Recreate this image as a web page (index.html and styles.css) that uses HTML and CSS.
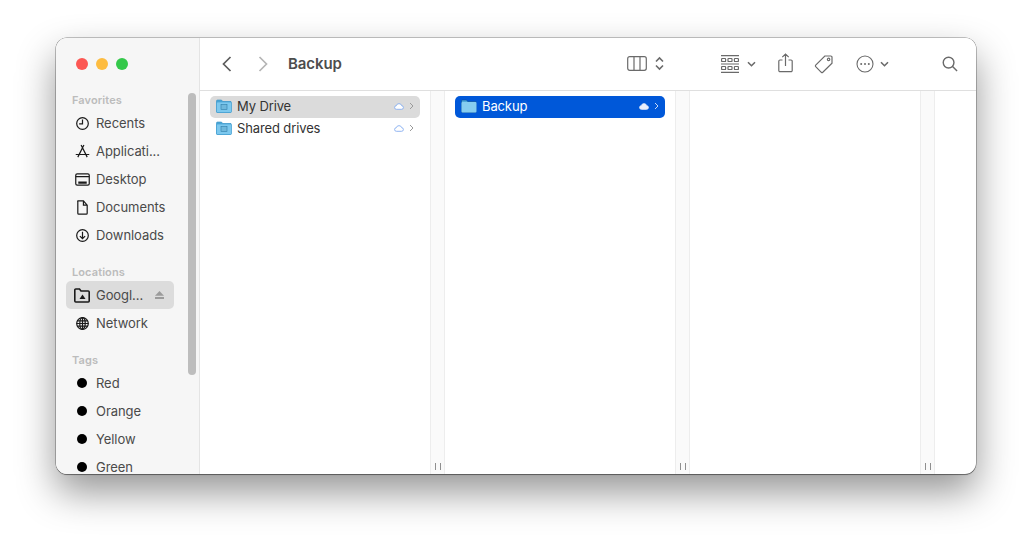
FILE: index.html
```html
<!DOCTYPE html>
<html lang="en">
<head>
<meta charset="utf-8">
<title>Backup</title>
<link rel="stylesheet" href="styles.css">
</head>
<body>
<div class="window">
  <aside class="sidebar">
    <div class="lights"><i class="light red"></i><i class="light yellow"></i><i class="light green"></i></div>
    <div class="group-label">Favorites</div>
    <div class="side-row"><svg class="si" viewBox="0 0 16 16"><circle cx="8" cy="8" r="6.200"/><path d="M8 3.800v4.600H4.400"/></svg><span>Recents</span></div>
    <div class="side-row"><svg class="si" viewBox="0 0 16 16"><path d="M6.500 1 13 14M9.500 1 3 14M.8 11.200h14.400"/></svg><span>Applicati...</span></div>
    <div class="side-row"><svg class="si" viewBox="0 0 16 16"><rect x=".8" y="2" width="14.400" height="12" rx="1.500"/><path d="M.8 5h14.400"/><path class="thick" d="M3.500 11.300h9"/></svg><span>Desktop</span></div>
    <div class="side-row"><svg class="si" viewBox="0 0 16 16"><path d="M3 1h6L13 5.500v8.500a1 1 0 0 1-1 1H4a1 1 0 0 1-1-1V2a1 1 0 0 1 0-1zM9 1v4.500h4"/></svg><span>Documents</span></div>
    <div class="side-row"><svg class="si" viewBox="0 0 16 16"><circle cx="8" cy="8" r="6.200"/><path d="M8 4v7.200M5.200 8.600 8 11.400l2.800-2.800"/></svg><span>Downloads</span></div>

    <div class="group-label second">Locations</div>
    <div class="side-row active"><svg class="si big" viewBox="0 0 16 15"><path d="M.8 13V2a1 1 0 0 1 1-1h3.700L7 3h7.200a1 1 0 0 1 1 1v9a1 1 0 0 1-1 1H1.800a1 1 0 0 1-1-1z"/><path class="fill" d="M8.500 6.500 11.500 11h-6z"/></svg><span>Googl...</span><svg class="eject" viewBox="0 0 9 8"><path d="M4.500 0 9 4.800H0z"/><rect y="6" width="9" height="2"/></svg></div>
    <div class="side-row"><svg class="si" viewBox="0 0 16 16"><circle cx="8" cy="8" r="6.200"/><ellipse cx="8" cy="8" rx="2.900" ry="6.200"/><path d="M8 1.800v12.400M2.400 5.300h11.200M1.800 8h12.400M2.400 10.700h11.200"/></svg><span>Network</span></div>

    <div class="group-label second">Tags</div>
    <div class="side-row"><i class="tag"></i><span>Red</span></div>
    <div class="side-row"><i class="tag"></i><span>Orange</span></div>
    <div class="side-row"><i class="tag"></i><span>Yellow</span></div>
    <div class="side-row"><i class="tag"></i><span>Green</span></div>
    <div class="scrollbar"></div>
  </aside>

  <main class="content">
    <header class="toolbar">
      <svg class="nav" viewBox="0 0 12 18"><path d="M9.500 2 2.500 9l7 7"/></svg>
      <svg class="nav off" viewBox="0 0 12 18"><path d="M2.500 2l7 7-7 7"/></svg>
      <h1 class="title">Backup</h1>
      <div class="tools">
        <svg class="columns" viewBox="0 0 20 15"><rect x=".7" y=".7" width="18.600" height="13.600" rx="2"/><path d="M7 .7v13.600M13 .7v13.600"/></svg>
        <svg class="updown" viewBox="0 0 9 15"><path d="M1 5.500 4.500 2 8 5.500M1 9.500 4.500 13 8 9.500"/></svg>
        <svg class="group" viewBox="0 0 18 18"><path d="M0 .7h18M0 9h18M0 17.300h18"/><rect x=".6" y="3.500" width="4" height="3" rx=".6"/><rect x="7" y="3.500" width="4" height="3" rx=".6"/><rect x="13.400" y="3.500" width="4" height="3" rx=".6"/><rect x=".6" y="11.500" width="4" height="3" rx=".6"/><rect x="7" y="11.500" width="4" height="3" rx=".6"/><rect x="13.400" y="11.500" width="4" height="3" rx=".6"/></svg>
        <svg class="caret c1" viewBox="0 0 9 6"><path d="M1 1.200 4.500 4.700 8 1.200"/></svg>
        <svg class="share" viewBox="0 0 15 20"><path d="M4.500 7H2a1.200 1.200 0 0 0-1.200 1.200v9.300A1.200 1.200 0 0 0 2 18.700h11a1.200 1.200 0 0 0 1.200-1.200V8.200A1.200 1.200 0 0 0 13 7h-2.500M7.500 13V1.200M4.300 4.200 7.500 1l3.200 3.200"/></svg>
        <svg class="tagicon" viewBox="0 0 20 20"><path d="M1.700 11.200 10.800 2h6a1.200 1.200 0 0 1 1.200 1.200v6L8.800 18.300a1.100 1.100 0 0 1-1.500 0l-5.600-5.600a1.100 1.100 0 0 1 0-1.500z"/><circle cx="14.600" cy="5.400" r="1.200"/></svg>
        <svg class="more" viewBox="0 0 18 18"><circle cx="9" cy="9" r="8"/><circle class="fill" cx="5.200" cy="9" r="1"/><circle class="fill" cx="9" cy="9" r="1"/><circle class="fill" cx="12.800" cy="9" r="1"/></svg>
        <svg class="caret c2" viewBox="0 0 9 6"><path d="M1 1.200 4.500 4.700 8 1.200"/></svg>
        <svg class="search" viewBox="0 0 17 17"><circle cx="7" cy="7" r="5.700"/><path d="M11.200 11.200 16 16"/></svg>
      </div>
    </header>

    <div class="browser">
      <section class="column">
        <div class="file-row inactive">
          <svg class="folder" viewBox="0 0 16 14"><path class="f-back" d="M.5 2a1 1 0 0 1 1-1h4l1.200 1.500H15v10a1 1 0 0 1-1 1H1.500a1 1 0 0 1-1-1z"/><rect class="f-front" x=".5" y="3" width="15" height="10.500" rx="1"/><rect class="f-glyph" x="5" y="5.500" width="6" height="5"/></svg>
          <span class="name">My Drive</span>
          <svg class="cloud" viewBox="0 0 10 7"><path d="M2.500 6.300a1.800 1.800 0 0 1-.2-3.600 2.800 2.800 0 0 1 5.400 0 1.800 1.800 0 0 1-.2 3.600z"/></svg>
          <svg class="chev" viewBox="0 0 5 8"><path d="M1 1l3 3-3 3"/></svg>
        </div>
        <div class="file-row">
          <svg class="folder" viewBox="0 0 16 14"><path class="f-back" d="M.5 2a1 1 0 0 1 1-1h4l1.200 1.500H15v10a1 1 0 0 1-1 1H1.500a1 1 0 0 1-1-1z"/><rect class="f-front" x=".5" y="3" width="15" height="10.500" rx="1"/><rect class="f-glyph" x="5" y="5.500" width="6" height="5"/></svg>
          <span class="name">Shared drives</span>
          <svg class="cloud" viewBox="0 0 10 7"><path d="M2.500 6.300a1.800 1.800 0 0 1-.2-3.600 2.800 2.800 0 0 1 5.400 0 1.800 1.800 0 0 1-.2 3.600z"/></svg>
          <svg class="chev" viewBox="0 0 5 8"><path d="M1 1l3 3-3 3"/></svg>
        </div>
      </section>
      <div class="divider"><i></i><i></i></div>
      <section class="column">
        <div class="file-row selected">
          <svg class="folder plain" viewBox="0 0 16 14"><path class="f-back" d="M.5 2a1 1 0 0 1 1-1h4l1.200 1.500H15v10a1 1 0 0 1-1 1H1.500a1 1 0 0 1-1-1z"/><rect class="f-front" x=".5" y="3" width="15" height="10.500" rx="1"/></svg>
          <span class="name">Backup</span>
          <svg class="cloud solid" viewBox="0 0 10 7"><path d="M2.500 6.300a1.800 1.800 0 0 1-.2-3.600 2.800 2.800 0 0 1 5.400 0 1.800 1.800 0 0 1-.2 3.600z"/></svg>
          <svg class="chev" viewBox="0 0 5 8"><path d="M1 1l3 3-3 3"/></svg>
        </div>
      </section>
      <div class="divider"><i></i><i></i></div>
      <section class="column"></section>
      <div class="divider"><i></i><i></i></div>
      <section class="column rest"></section>
    </div>
  </main>
</div>
</body>
</html>
```
FILE: styles.css
```css
* { box-sizing: border-box; }
html, body { margin: 0; height: 100%; background: #fff; overflow: hidden; }
body { padding: 38px 56px 74px; font-family: "Inter", "Liberation Sans", sans-serif; }

.window {
  display: flex;
  width: 920px;
  height: 436px;
  border-radius: 11px;
  overflow: hidden;
  background: #fff;
  box-shadow: 0 0 0 .5px rgba(0,0,0,.45), 0 1px 1px rgba(0,0,0,.3), 0 18px 38px rgba(0,0,0,.42);
}

.sidebar {
  position: relative;
  flex: 0 0 144px;
  padding: 0 10px;
  background: #f6f6f6;
  border-right: 1px solid #e4e4e4;
  overflow: hidden;
}
.lights { display: flex; gap: 8px; padding: 20px 0 0 10px; height: 53px; }
.light { width: 12px; height: 12px; border-radius: 50%; }
.red { background: #fc5753; }
.yellow { background: #fdbc40; }
.green { background: #34c84a; }

.group-label { height: 18px; padding-left: 6px; font-size: 11px; font-weight: 600; line-height: 18px; color: #bcbcbc; letter-spacing: .1px; }
.group-label.second { margin-top: 14px; }

.side-row { display: flex; align-items: center; width: 108px; height: 28px; padding-left: 9px; border-radius: 5px; font-size: 13px; letter-spacing: -.06px; color: #4a4a4a; }
.side-row.active { background: #dcdcdc; padding-left: 8px; }
.side-row span { margin-left: 6px; white-space: nowrap; }
.si { flex: none; width: 15px; height: 15px; fill: none; stroke: #1a1a1a; stroke-width: 1.300; }
.si .thick { stroke-width: 2.400; }
.si .fill { fill: #1a1a1a; stroke: none; }
.si.big { width: 16px; height: 15px; stroke-width: 1.600; }
.eject { flex: none; width: 9px; height: 8px; margin-left: 12px; fill: #9b9b9b; }
.tag { flex: none; width: 10px; height: 10px; margin: 0 3px 0 2px; border-radius: 50%; background: #000; }
.scrollbar { position: absolute; left: 132px; top: 55px; width: 8px; height: 282px; border-radius: 4px; background: #bdbdbd; }

.content { flex: 1; display: flex; flex-direction: column; min-width: 0; }

.toolbar { flex: 0 0 53px; display: flex; align-items: center; padding: 0 18px 1px 21px; border-bottom: 1px solid #dfdfdf; background: #fff; }
.nav { width: 12px; height: 18px; margin-right: 24px; fill: none; stroke: #5c5c5c; stroke-width: 1.700; }
.nav.off { stroke: #b5b5b5; margin-right: 19px; }
.title { margin: 0; font-size: 15px; font-weight: 600; color: #4d4d4d; letter-spacing: -.1px; }
.tools { flex: 1; display: flex; align-items: center; fill: none; stroke: #6a6a6a; stroke-width: 1.200; }
.tools svg { flex: none; }
.columns { width: 20px; height: 15px; margin-left: 285px; }
.updown { width: 9px; height: 15px; margin-left: 8px; stroke-width: 1.600; }
.group { width: 18px; height: 18px; margin-left: 57px; }
.caret { width: 9px; height: 6px; stroke-width: 1.600; }
.c1 { margin-left: 8px; }
.share { width: 15px; height: 20px; margin-left: 22px; stroke-width: 1.200; margin-top: -1px; }
.tagicon { width: 20px; height: 20px; margin-left: 21px; stroke-width: 1.200; }
.more { width: 18px; height: 18px; margin-left: 22px; stroke-width: 1.100; }
.more .fill { fill: #6a6a6a; stroke: none; }
.c2 { margin-left: 6px; }
.search { width: 16px; height: 16px; margin-left: auto; stroke-width: 1.500; }

.browser { flex: 1; display: flex; min-height: 0; }
.column { flex: 0 0 230px; padding: 5px 10px 0; }
.column.rest { flex: 1; }
.divider { flex: 0 0 15px; display: flex; align-items: flex-end; justify-content: center; gap: 4px; padding-bottom: 4px; background: #fafafa; border: solid #ededed; border-width: 0 1px; }
.divider i { width: 1px; height: 7px; background: #8f8f8f; }

.file-row { display: flex; align-items: center; width: 210px; height: 22px; padding: 0 6px 2px 6px; border-radius: 5px; font-size: 13px; letter-spacing: -.12px; color: #333; }
.file-row.inactive { background: #dbdbdb; }
.file-row.selected { background: #0058d9; color: #fff; }
.name { margin-left: 5px; flex: 1; white-space: nowrap; }
.folder { flex: none; width: 16px; height: 14px; }
.f-back { fill: #4fa8d8; stroke: #2f8fc4; stroke-width: .6; }
.f-front { fill: #7cc8ee; stroke: #3a9bd0; stroke-width: .6; }
.f-glyph { fill: #6fb8dc; stroke: #2f7ea8; stroke-width: .6; }
.plain .f-back { fill: #4fa8d8; stroke: #0c4a9a; }
.plain .f-front { fill: #86cdf0; stroke: none; }
.cloud { flex: none; width: 10px; height: 7px; fill: #fff; stroke: #86aef0; stroke-width: .9; }
.cloud.solid { fill: #e8eefc; stroke: #e8eefc; }
.chev { flex: none; width: 5px; height: 8px; margin-left: 5px; fill: none; stroke: #9a9a9a; stroke-width: 1; }
.selected .chev { stroke: #c6d9f7; }
```
